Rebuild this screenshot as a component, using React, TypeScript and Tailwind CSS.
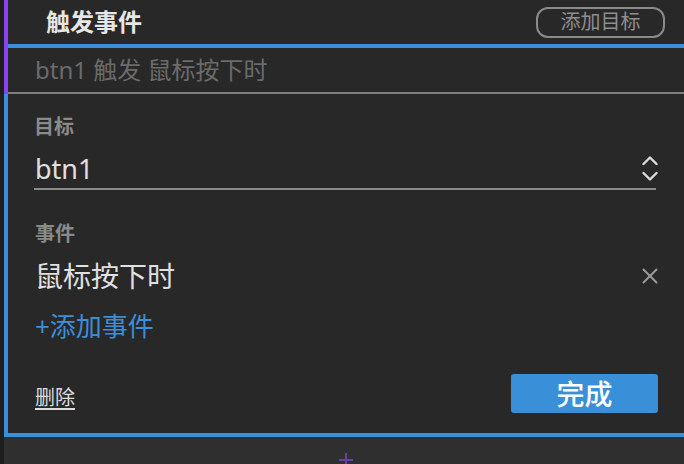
import React from "react";

const font = { fontFamily: '"Noto Sans", "Noto Sans CJK SC", sans-serif' };

function Chevrons() {
  return (
    <svg width="16" height="27" viewBox="0 0 16 27" fill="none">
      <polyline points="1.5,9 8,2.5 14.5,9" stroke="#dcdcdc" strokeWidth="2.4" strokeLinecap="round" strokeLinejoin="round" />
      <polyline points="1.5,18 8,24.5 14.5,18" stroke="#dcdcdc" strokeWidth="2.4" strokeLinecap="round" strokeLinejoin="round" />
    </svg>
  );
}

function XIcon() {
  return (
    <svg width="16" height="16" viewBox="0 0 16 16" fill="none">
      <line x1="1.5" y1="1.5" x2="14.5" y2="14.5" stroke="#9a9a9a" strokeWidth="2" strokeLinecap="round" />
      <line x1="14.5" y1="1.5" x2="1.5" y2="14.5" stroke="#9a9a9a" strokeWidth="2" strokeLinecap="round" />
    </svg>
  );
}

export default function App() {
  return (
    <div className="w-[684px] h-[464px] flex bg-[#1e1e1e] overflow-hidden" style={font}>
      <div className="w-[4px] bg-[#1e1e1e]" />
      <div className="flex-1 flex flex-col">
        {/* Top section */}
        <div className="flex">
          <div className="w-[4px] bg-[#8a43f2]" />
          <div className="flex-1 flex flex-col bg-[#282828]">
            <div className="h-[44px] flex items-center justify-between pl-[38px] pr-[19px]">
              <span className="text-[24px] font-bold text-[#e6e6e6] leading-none">触发事件</span>
              <div className="w-[129px] h-[31px] rounded-[12px] border-2 border-[#8a8a8a] flex items-center justify-center text-[20px] text-[#8e8e8e] leading-none">
                添加目标
              </div>
            </div>
            <div className="h-[4px] bg-[#3a8fd9]" />
            <div className="h-[44px] flex items-center pl-[27px] text-[24px] text-[#6b6b6b] leading-none">
              btn1 触发 鼠标按下时
            </div>
            <div className="h-[2px] bg-[#808080]" />
          </div>
        </div>

        {/* Body section */}
        <div className="h-[343px] bg-[#282828] border-l-4 border-b-4 border-[#3a8fd9] pl-[26px] pr-[26px] pt-[19px] flex flex-col">
          <div className="h-[28px] flex items-center text-[20px] font-semibold text-[#8a8a8a] leading-none">目标</div>
          <div className="mt-[7px] h-[40px] flex items-center justify-between">
            <span className="text-[27px] text-[#e0e0e0] leading-none pl-[1px]">btn1</span>
            <Chevrons />
          </div>
          <div className="h-[2px] bg-[#8a8a8a] mr-[2px]" />
          <div className="mt-[30px] h-[28px] flex items-center text-[20px] font-semibold text-[#8a8a8a] leading-none pl-[1px]">事件</div>
          <div className="mt-[8px] h-[40px] flex items-center justify-between">
            <span className="text-[28px] text-[#e0e0e0] leading-none pl-[1px]">鼠标按下时</span>
            <XIcon />
          </div>
          <div className="mt-[12px] h-[36px] flex items-center text-[26px] text-[#3a8fd9] leading-none pl-[1px]">+添加事件</div>
          <div className="mt-[30px] h-[39px] flex items-center justify-between">
            <span className="text-[20px] text-[#dcdcdc] underline underline-offset-[3px] leading-none pl-[1px] mt-[8px]">删除</span>
            <div className="w-[147px] h-[39px] rounded-[3px] bg-[#3a8fd9] flex items-center justify-center text-[28px] font-medium text-white leading-none">
              完成
            </div>
          </div>
        </div>

        {/* Bottom canvas */}
        <div className="flex-1 bg-[#2f2f2f] relative">
          <div className="absolute left-[335px] top-[16px] w-[14px] h-[14px]">
            <div className="absolute left-[6px] top-0 w-[2px] h-[14px] bg-[#6a3fa8]" />
            <div className="absolute left-0 top-[6px] w-[14px] h-[2px] bg-[#6a3fa8]" />
          </div>
        </div>
      </div>
    </div>
  );
}
